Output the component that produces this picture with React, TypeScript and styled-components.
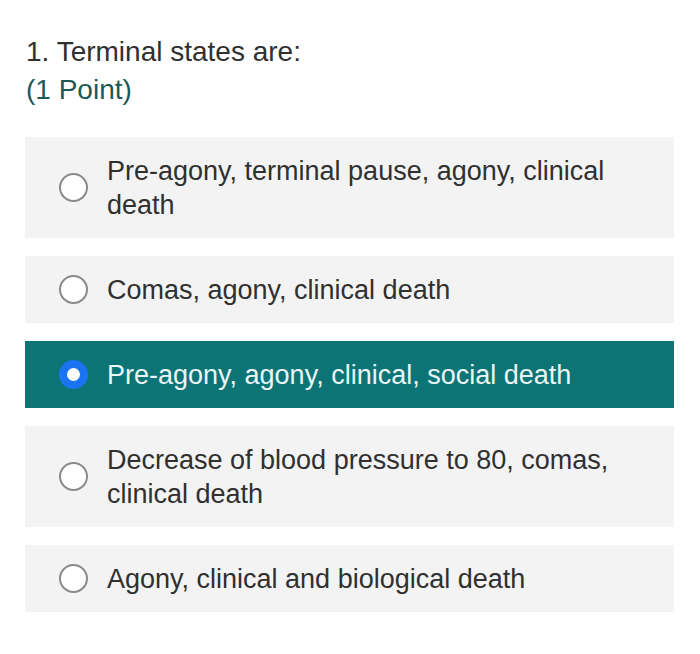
import * as React from 'react';
import styled, { createGlobalStyle } from 'styled-components';

const GlobalStyle = createGlobalStyle`
    html, body {
        margin: 0;
        padding: 0;
        background: #ffffff;
    }
    body {
        font-family: 'Liberation Sans', Arial, sans-serif;
    }
`;

const Page = styled.div`
    width: 700px;
    height: 654px;
    box-sizing: border-box;
    padding: 33px 26px 0 25px;
`;

const Title = styled.div`
    font-size: 28px;
    line-height: 38px;
    color: #303030;
    padding-left: 1px;
`;

const Points = styled.div`
    font-size: 28px;
    line-height: 38px;
    color: #1d5a57;
    padding-left: 1px;
`;

const Options = styled.div`
    display: flex;
    flex-direction: column;
    gap: 18px;
    margin-top: 28px;
`;

const Option = styled.label<{ selected: boolean }>`
    display: flex;
    align-items: center;
    box-sizing: border-box;
    padding: 16.5px 50px 16.5px 34px;
    background: ${({ selected }) => (selected ? '#0c7475' : '#f3f3f3')};
    color: ${({ selected }) => (selected ? '#eaf6f6' : '#303030')};
    cursor: pointer;
`;

const Radio = styled.span<{ checked: boolean }>`
    flex: none;
    box-sizing: border-box;
    width: 29px;
    height: 29px;
    border-radius: 50%;
    background: #ffffff;
    border: ${({ checked }) => (checked ? '8.5px solid #1a73f0' : '2.5px solid #8a8a8a')};
    margin-right: 19px;
`;

const OptionText = styled.span`
    font-size: 27px;
    line-height: 34px;
`;

const options = [
    'Pre-agony, terminal pause, agony, clinical death',
    'Comas, agony, clinical death',
    'Pre-agony, agony, clinical, social death',
    'Decrease of blood pressure to 80, comas, clinical death',
    'Agony, clinical and biological death',
];

export default function App() {
    const [selected, setSelected] = React.useState(2);
    return (
        <>
            <GlobalStyle />
            <Page>
                <Title>1. Terminal states are:</Title>
                <Points>(1 Point)</Points>
                <Options>
                    {options.map((text, i) => (
                        <Option key={i} selected={selected === i} onClick={() => setSelected(i)}>
                            <Radio checked={selected === i} />
                            <OptionText>{text}</OptionText>
                        </Option>
                    ))}
                </Options>
            </Page>
        </>
    );
}
